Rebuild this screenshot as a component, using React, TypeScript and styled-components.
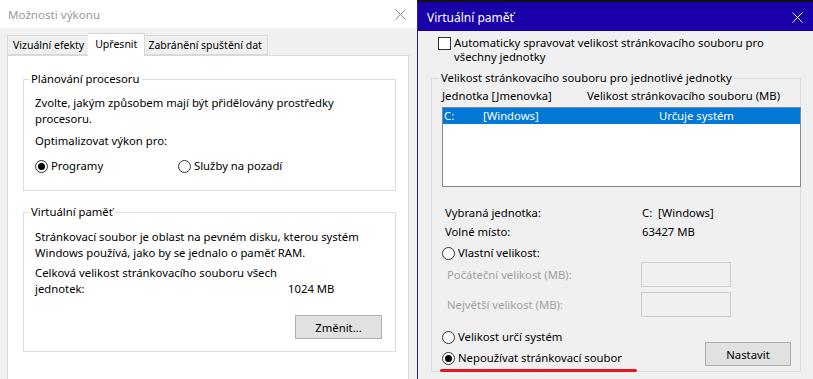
import React from 'react';
import styled, { createGlobalStyle } from 'styled-components';

const Global = createGlobalStyle`
  html, body { margin: 0; padding: 0; }
  body {
    width: 813px; height: 379px; overflow: hidden; background: #f0f0f0;
    font-family: "Segoe UI", "Noto Sans", "Open Sans", sans-serif;
    font-size: 11.3px; color: #000;
  }
  * { box-sizing: border-box; }
`;

const Screen = styled.div`
  display: flex; width: 813px; height: 379px; overflow: hidden;
`;

/* ---------- left window ---------- */
const LeftWindow = styled.div`
  width: 417px; flex: none; display: flex; flex-direction: column; background: #f0f0f0;
`;
const LeftTitleBar = styled.div`
  height: 28px; flex: none; background: #fff; display: flex; align-items: center;
  justify-content: space-between; padding: 0 11px 0 8px; color: #9a9a9a; font-size: 11.6px;
`;
const TabStrip = styled.div`
  display: flex; align-items: flex-end; height: 22px; margin: 5px 0 0 7px; position: relative; z-index: 1;
`;
const Tab = styled.div<{ $active?: boolean }>`
  height: ${p => (p.$active ? 23 : 20)}px;
  padding: ${p => (p.$active ? '0 7px 3px' : '0 5px')};
  margin: ${p => (p.$active ? '0 -2px -1px' : '0')};
  background: ${p => (p.$active ? '#fff' : '#f0f0f0')};
  border: 1px solid #d9d9d9;
  border-bottom: ${p => (p.$active ? 'none' : '1px solid #d9d9d9')};
  position: relative; z-index: ${p => (p.$active ? 2 : 1)};
  display: flex; align-items: center; line-height: 16px; white-space: nowrap;
  font-size: 10.5px;
  & + & { border-left: none; }
`;
const Pane = styled.div`
  flex: 1; margin: 0 8px 0 7px; background: #fff; border: 1px solid #d9d9d9; border-bottom: none;
  padding: 15px 0 0 15px; display: flex; flex-direction: column;
`;
const Group = styled.fieldset<{ $w: number; $mt?: number; $pt: number; $pb: number; $pl: number }>`
  width: ${p => p.$w}px; margin: ${p => p.$mt ?? 0}px 0 0 0; min-inline-size: 0;
  border: 1px solid #dcdcdc;
  padding: ${p => p.$pt}px 0 ${p => p.$pb}px ${p => p.$pl}px;
  display: flex; flex-direction: column;
`;
const Legend = styled.legend<{ $ml: number }>`
  margin-left: ${p => p.$ml}px; padding: 0 2px; line-height: 16px;
`;
const Line = styled.div<{ $mt?: number; $lh?: number; $gray?: boolean }>`
  line-height: ${p => p.$lh ?? 16}px; margin-top: ${p => p.$mt ?? 0}px; white-space: nowrap;
  color: ${p => (p.$gray ? '#a0a0a0' : '#000')};
`;
const RadioGrid = styled.div<{ $mt?: number }>`
  display: grid; grid-template-columns: 143px auto; margin-top: ${p => p.$mt ?? 0}px;
`;
const RadioItem = styled.label<{ $mt?: number }>`
  display: flex; align-items: center; gap: 3px; line-height: 16px; height: 16px;
  margin-top: ${p => p.$mt ?? 0}px; white-space: nowrap; position: relative;
`;
const RadioCircle = styled.span<{ $on?: boolean }>`
  width: 13px; height: 13px; border-radius: 50%; border: 1px solid #333; background: #fff;
  display: flex; align-items: center; justify-content: center; flex: none;
  &::after {
    content: ''; width: 7px; height: 7px; border-radius: 50%;
    background: ${p => (p.$on ? '#000' : 'transparent')};
  }
`;
const ValueGrid = styled.div<{ $col: number; $mt?: number }>`
  display: grid; grid-template-columns: ${p => p.$col}px auto; line-height: 16px;
  margin-top: ${p => p.$mt ?? 0}px; white-space: nowrap;
`;
const Button = styled.div<{ $w: number }>`
  width: ${p => p.$w}px; height: 24px; background: #e1e1e1; border: 1px solid #adadad;
  display: flex; align-items: center; justify-content: center; flex: none;
`;
const ButtonRow = styled.div<{ $mt: number; $pr: number }>`
  display: flex; justify-content: flex-end; margin-top: ${p => p.$mt}px; padding-right: ${p => p.$pr}px;
`;

/* ---------- right window ---------- */
const RightColumn = styled.div`
  flex: 1; display: flex; flex-direction: column;
`;
const TopStrip = styled.div`
  height: 2px; background: #111; flex: none;
`;
const RightWindow = styled.div`
  flex: 1; display: flex; flex-direction: column; border-left: 1px solid #2a1cb0; background: #f0f0f0;
`;
const RightTitleBar = styled.div`
  height: 29px; flex: none; background: #1a00a8; color: #fff; display: flex; align-items: center;
  justify-content: space-between; padding: 1px 10px 0 9px; font-size: 12px;
`;
const RightBody = styled.div`
  padding: 5px 0 0 13px; display: flex; flex-direction: column;
`;
const CheckRow = styled.div`
  display: flex; align-items: flex-start; gap: 3px; padding-left: 7px;
`;
const CheckBox = styled.span`
  width: 13px; height: 13px; border: 1px solid #333; background: #fff; margin-top: 1px; flex: none;
`;
const HeaderGrid = styled.div`
  display: grid; grid-template-columns: 145px auto; line-height: 16px; white-space: nowrap;
`;
const ListBox = styled.div`
  width: 359px; height: 80px; margin-top: 3px; background: #fff; border: 1px solid #828790; padding: 0;
`;
const ListRow = styled.div<{ $sel?: boolean }>`
  display: grid; grid-template-columns: 39px 176px auto; height: 16px; line-height: 16px;
  padding-left: 1px; white-space: nowrap;
  background: ${p => (p.$sel ? '#0078d7' : 'transparent')};
  color: ${p => (p.$sel ? '#fff' : '#000')};
`;
const FieldRow = styled.div<{ $mt: number }>`
  display: grid; grid-template-columns: 194px 90px; align-items: center; height: 25px;
  margin-top: ${p => p.$mt}px; padding-left: 5px;
`;
const TextBox = styled.div`
  width: 90px; height: 25px; border: 1px solid #cccccc; background: #f0f0f0;
`;
const BottomRow = styled.div`
  display: flex; justify-content: space-between; align-items: flex-end; margin-top: 12px;
  padding-right: 9px;
`;
const RadioCol = styled.div`
  display: flex; flex-direction: column;
`;
const Underline = styled.span`
  position: absolute; left: -2px; top: 19px; width: 197px; height: 3px; border-radius: 2px; background: #e8151f;
`;

const CloseIcon: React.FC<{ color: string }> = ({ color }) => (
  <svg width="11" height="11" viewBox="0 0 11 11">
    <path d="M0.5 0.5 L10.5 10.5 M10.5 0.5 L0.5 10.5" stroke={color} strokeWidth="1" fill="none" />
  </svg>
);

export default function App() {
  return (
    <>
      <Global />
      <Screen>
        <LeftWindow>
          <LeftTitleBar>
            <span>Možnosti výkonu</span>
            <CloseIcon color="#8a8a8a" />
          </LeftTitleBar>
          <TabStrip>
            <Tab>Vizuální efekty</Tab>
            <Tab $active>Upřesnit</Tab>
            <Tab>Zabránění spuštění dat</Tab>
          </TabStrip>
          <Pane>
            <Group $w={373} $pt={8} $pb={16} $pl={11}>
              <Legend $ml={-6}>Plánování procesoru</Legend>
              <Line>Zvolte, jakým způsobem mají být přidělovány prostředky</Line>
              <Line>procesoru.</Line>
              <Line $mt={6}>Optimalizovat výkon pro:</Line>
              <RadioGrid $mt={9}>
                <RadioItem><RadioCircle $on />Programy</RadioItem>
                <RadioItem><RadioCircle />Služby na pozadí</RadioItem>
              </RadioGrid>
            </Group>
            <Group $w={373} $mt={13} $pt={9} $pb={12} $pl={11}>
              <Legend $ml={-6}>Virtuální paměť</Legend>
              <Line>Stránkovací soubor je oblast na pevném disku, kterou systém</Line>
              <Line>Windows používá, jako by se jednalo o paměť RAM.</Line>
              <Line $mt={4}>Celková velikost stránkovacího souboru všech</Line>
              <ValueGrid $col={253}>
                <span>jednotek:</span>
                <span>1024 MB</span>
              </ValueGrid>
              <ButtonRow $mt={18} $pr={13}>
                <Button $w={87}>Změnit...</Button>
              </ButtonRow>
            </Group>
          </Pane>
        </LeftWindow>

        <RightColumn>
          <TopStrip />
          <RightWindow>
            <RightTitleBar>
              <span>Virtuální paměť</span>
              <CloseIcon color="#ffffff" />
            </RightTitleBar>
            <RightBody>
              <CheckRow>
                <CheckBox />
                <div>
                  <Line $lh={14}>Automaticky spravovat velikost stránkovacího souboru pro</Line>
                  <Line $lh={14}>všechny jednotky</Line>
                </div>
              </CheckRow>
              <Group $w={370} $mt={6} $pt={2} $pb={5} $pl={10}>
                <Legend $ml={-3}>Velikost stránkovacího souboru pro jednotlivé jednotky</Legend>
                <HeaderGrid>
                  <span>Jednotka [Jmenovka]</span>
                  <span>Velikost stránkovacího souboru (MB)</span>
                </HeaderGrid>
                <ListBox>
                  <ListRow $sel>
                    <span>C:</span>
                    <span>[Windows]</span>
                    <span>Určuje systém</span>
                  </ListRow>
                </ListBox>
                <ValueGrid $col={200} $mt={18}>
                  <span>&nbsp;Vybraná jednotka:</span>
                  <span>C:&nbsp; [Windows]</span>
                </ValueGrid>
                <ValueGrid $col={200} $mt={3}>
                  <span>&nbsp;Volné místo:</span>
                  <span>63427 MB</span>
                </ValueGrid>
                <RadioItem $mt={5}><RadioCircle />Vlastní velikost:</RadioItem>
                <FieldRow $mt={1}>
                  <Line $gray>Počáteční velikost (MB):</Line>
                  <TextBox />
                </FieldRow>
                <FieldRow $mt={5}>
                  <Line $gray>Největší velikost (MB):</Line>
                  <TextBox />
                </FieldRow>
                <BottomRow>
                  <RadioCol>
                    <RadioItem><RadioCircle />Velikost určí systém</RadioItem>
                    <RadioItem $mt={5}>
                      <RadioCircle $on />Nepoužívat stránkovací soubor
                      <Underline />
                    </RadioItem>
                  </RadioCol>
                  <Button $w={86}>Nastavit</Button>
                </BottomRow>
              </Group>
            </RightBody>
          </RightWindow>
        </RightColumn>
      </Screen>
    </>
  );
}
